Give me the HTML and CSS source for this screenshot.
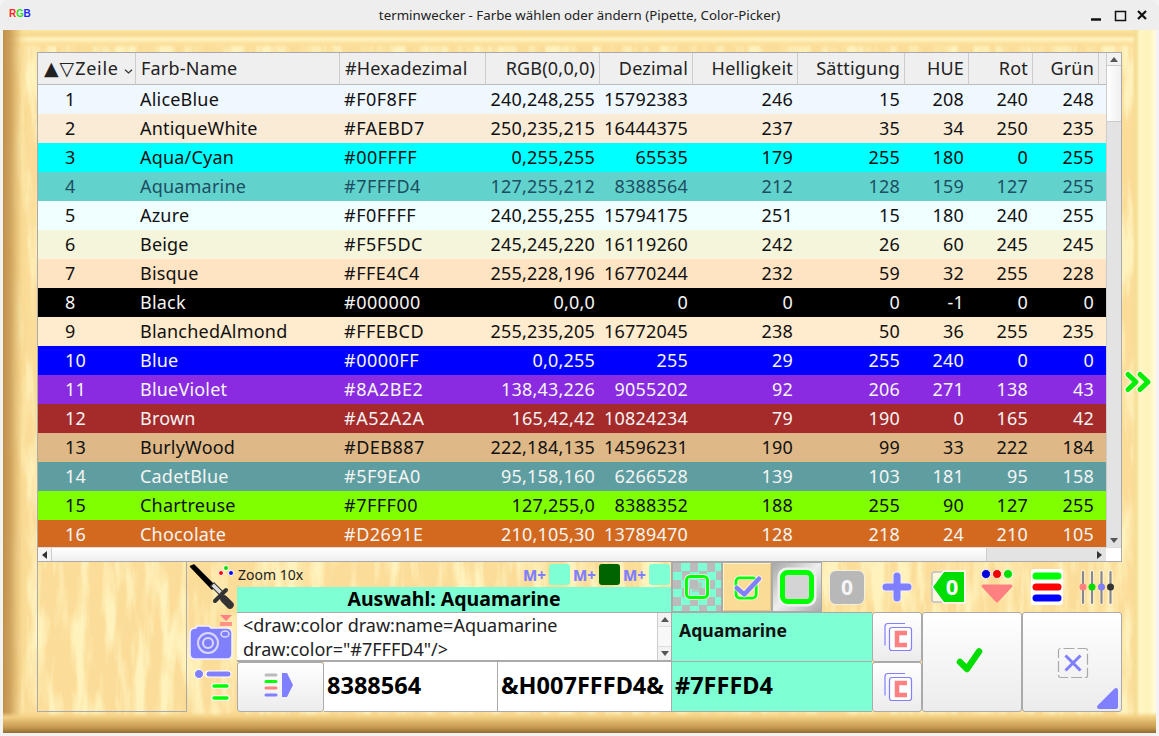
FILE: index.html
```html
<!DOCTYPE html>
<html lang="de">
<head>
<meta charset="utf-8">
<title>terminwecker - Farbe wählen oder ändern</title>
<link rel="stylesheet" href="styles.css">
</head>
<body>
<header class="titlebar">
  <span class="logo"><span class="r">R</span><span class="g">G</span><span class="b">B</span></span>
  <span class="title">terminwecker - Farbe wählen oder ändern (Pipette, Color-Picker)</span>
  <span class="winbtns">
    <svg width="70" height="30" viewBox="0 0 70 30"><path d="M3 19.500h10" stroke="#111" stroke-width="2.500"/><rect x="27.500" y="11.500" width="10" height="9" fill="none" stroke="#111" stroke-width="1.500"/><path d="M50 11l8 8M58 11l-8 8" stroke="#111" stroke-width="2.200"/></svg>
  </span>
</header>
<main class="wood">
  <svg class="woodtex" width="1153" height="703" aria-hidden="true">
    <filter id="grain" x="0" y="0" width="100%" height="100%" color-interpolation-filters="sRGB"><feTurbulence type="fractalNoise" baseFrequency="0.07 0.012" numOctaves="4" seed="7"/><feColorMatrix values="0 0 0 0 1 0 0 0 0 0.95 0 0 0 0 0.74 3.500 0 0 0 -1.450"/></filter>
    <rect width="1153" height="703" filter="url(#grain)"/>
  </svg>
  <div class="bevel"></div>
  <div class="content">
    <section class="tablebox">
      <div class="tablerow">
        <div class="tableclip">
          <table class="colors">
            <colgroup><col class="c0"><col class="c1"><col class="c2"><col class="c3"><col class="c4"><col class="c5"><col class="c6"><col class="c7"><col class="c8"><col class="c9"><col class="c10"></colgroup>
            <thead><tr><th class="sortcol"><span class="sort">▲▽</span><span class="zeile">Zeile</span><svg class="chev" width="9" height="5" viewBox="0 0 9 5"><path d="M1 .7L4.500 4 8 .7" fill="none" stroke="#333" stroke-width="1.200"/></svg></th><th class="l">Farb-Name</th><th class="h">#Hexadezimal</th><th>RGB(0,0,0)</th><th>Dezimal</th><th>Helligkeit</th><th>Sättigung</th><th>HUE</th><th>Rot</th><th>Grün</th><th></th></tr></thead>
            <tbody>
              <tr style="background:#F0F8FF"><td class="n">1</td><td class="l">AliceBlue</td><td class="h">#F0F8FF</td><td>240,248,255</td><td>15792383</td><td>246</td><td>15</td><td>208</td><td>240</td><td>248</td><td></td></tr>
              <tr style="background:#FAEBD7"><td class="n">2</td><td class="l">AntiqueWhite</td><td class="h">#FAEBD7</td><td>250,235,215</td><td>16444375</td><td>237</td><td>35</td><td>34</td><td>250</td><td>235</td><td></td></tr>
              <tr style="background:#00FFFF"><td class="n">3</td><td class="l">Aqua/Cyan</td><td class="h">#00FFFF</td><td>0,255,255</td><td>65535</td><td>179</td><td>255</td><td>180</td><td>0</td><td>255</td><td></td></tr>
              <tr class="sel" style="background:#62D3CC"><td class="n">4</td><td class="l">Aquamarine</td><td class="h">#7FFFD4</td><td>127,255,212</td><td>8388564</td><td>212</td><td>128</td><td>159</td><td>127</td><td>255</td><td></td></tr>
              <tr style="background:#F0FFFF"><td class="n">5</td><td class="l">Azure</td><td class="h">#F0FFFF</td><td>240,255,255</td><td>15794175</td><td>251</td><td>15</td><td>180</td><td>240</td><td>255</td><td></td></tr>
              <tr style="background:#F5F5DC"><td class="n">6</td><td class="l">Beige</td><td class="h">#F5F5DC</td><td>245,245,220</td><td>16119260</td><td>242</td><td>26</td><td>60</td><td>245</td><td>245</td><td></td></tr>
              <tr style="background:#FFE4C4"><td class="n">7</td><td class="l">Bisque</td><td class="h">#FFE4C4</td><td>255,228,196</td><td>16770244</td><td>232</td><td>59</td><td>32</td><td>255</td><td>228</td><td></td></tr>
              <tr class="lt" style="background:#000000"><td class="n">8</td><td class="l">Black</td><td class="h">#000000</td><td>0,0,0</td><td>0</td><td>0</td><td>0</td><td>-1</td><td>0</td><td>0</td><td></td></tr>
              <tr style="background:#FFEBCD"><td class="n">9</td><td class="l">BlanchedAlmond</td><td class="h">#FFEBCD</td><td>255,235,205</td><td>16772045</td><td>238</td><td>50</td><td>36</td><td>255</td><td>235</td><td></td></tr>
              <tr class="lt" style="background:#0000FF"><td class="n">10</td><td class="l">Blue</td><td class="h">#0000FF</td><td>0,0,255</td><td>255</td><td>29</td><td>255</td><td>240</td><td>0</td><td>0</td><td></td></tr>
              <tr class="lt" style="background:#8A2BE2"><td class="n">11</td><td class="l">BlueViolet</td><td class="h">#8A2BE2</td><td>138,43,226</td><td>9055202</td><td>92</td><td>206</td><td>271</td><td>138</td><td>43</td><td></td></tr>
              <tr class="lt" style="background:#A52A2A"><td class="n">12</td><td class="l">Brown</td><td class="h">#A52A2A</td><td>165,42,42</td><td>10824234</td><td>79</td><td>190</td><td>0</td><td>165</td><td>42</td><td></td></tr>
              <tr style="background:#DEB887"><td class="n">13</td><td class="l">BurlyWood</td><td class="h">#DEB887</td><td>222,184,135</td><td>14596231</td><td>190</td><td>99</td><td>33</td><td>222</td><td>184</td><td></td></tr>
              <tr class="lt" style="background:#5F9EA0"><td class="n">14</td><td class="l">CadetBlue</td><td class="h">#5F9EA0</td><td>95,158,160</td><td>6266528</td><td>139</td><td>103</td><td>181</td><td>95</td><td>158</td><td></td></tr>
              <tr style="background:#7FFF00"><td class="n">15</td><td class="l">Chartreuse</td><td class="h">#7FFF00</td><td>127,255,0</td><td>8388352</td><td>188</td><td>255</td><td>90</td><td>127</td><td>255</td><td></td></tr>
              <tr class="lt" style="background:#D2691E"><td class="n">16</td><td class="l">Chocolate</td><td class="h">#D2691E</td><td>210,105,30</td><td>13789470</td><td>128</td><td>218</td><td>24</td><td>210</td><td>105</td><td></td></tr>
            </tbody>
          </table>
        </div>
        <div class="vbar">
          <span class="sbtn"><i class="up"></i></span>
          <span class="vthumb"></span>
          <span class="vtrough"></span>
          <span class="sbtn plain"><i class="down"></i></span>
        </div>
      </div>
      <div class="hbar">
        <span class="hbtn"><i class="left"></i></span>
        <span class="hthumb"></span>
        <span class="htrough"></span>
        <span class="hbtn"><i class="right"></i></span>
        <span class="corner"></span>
      </div>
    </section>

    <section class="bottom">
      <div class="preview"></div>
      <div class="tools">
        <svg width="50" height="50" viewBox="0 0 50 50"><path d="M3.500 4.500L7 3l21 21-3 3z" fill="#000" stroke="#000" stroke-width="1.500" stroke-linejoin="round"/><path d="M23 24l4-4 10 10-4 4z" fill="#333"/><path d="M24.500 24l2.500-2.500 8 8-2.500 2.500z" fill="#ddd"/><path d="M28 39l11-11" stroke="#333" stroke-width="4" stroke-linecap="round"/><path d="M37 37l6 6" stroke="#333" stroke-width="7.500" stroke-linecap="round"/><circle cx="34" cy="11" r="2.500" fill="#f00" stroke="#fff"/><circle cx="39" cy="6" r="2.500" fill="#0d0" stroke="#fff"/><circle cx="44" cy="11" r="2.500" fill="#00f" stroke="#fff"/></svg>
        <svg width="50" height="50" viewBox="0 0 50 50"><path d="M33 3h12l-6 6z" fill="#ff8080"/><path d="M33 10h12v4H33z" fill="#ff8080" opacity=".8"/><path d="M9 16l1-2h12l2 2h15q6 0 6 5v21q0 5-5 5H8q-5 0-5-5V21q0-5 6-5z" fill="#8080ff" stroke="#f4f0ff" stroke-width="1.500"/><circle cx="21" cy="31" r="10" fill="none" stroke="#d9d9ff" stroke-width="2"/><circle cx="21" cy="31" r="5" fill="none" stroke="#d9d9ff" stroke-width="2"/><ellipse cx="38" cy="22" rx="4" ry="3" fill="none" stroke="#d9d9ff" stroke-width="1.500"/></svg>
        <svg width="50" height="50" viewBox="0 0 50 50"><circle cx="12" cy="12" r="4.500" fill="#8080ff" stroke="#fff"/><path d="M21 12h20" stroke="#fff" stroke-width="7" stroke-linecap="round"/><path d="M22 12h19" stroke="#8080ff" stroke-width="5" stroke-linecap="round"/><path d="M27 24h13M27 36h13" stroke="#fff" stroke-width="5.500" stroke-linecap="round"/><path d="M27 24h13M27 36h13" stroke="#0f0" stroke-width="3.500" stroke-linecap="round"/></svg>
      </div>
      <div class="center-top">
        <div class="zoomrow">
          <span class="zoom">Zoom 10x</span>
          <span class="mem"><b>M+</b><i class="sw aqua"></i></span>
          <span class="mem"><b>M+</b><i class="sw green"></i></span>
          <span class="mem"><b>M+</b><i class="sw aqua"></i></span>
        </div>
        <div class="auswahl">Auswahl: Aquamarine</div>
      </div>
      <div class="iconrow">
        <span class="ico checker"><svg width="50" height="50" viewBox="0 0 50 50"><rect x="14" y="14" width="22" height="22" rx="4" fill="none" stroke="#dfffe8" stroke-width="5"/><rect x="14" y="14" width="22" height="22" rx="4" fill="none" stroke="#0f0" stroke-width="3"/><rect x="20" y="20" width="10" height="10" fill="#bbb" opacity=".7"/></svg></span>
        <span class="ico woodbtn"><svg width="50" height="50" viewBox="0 0 50 50"><rect x="13" y="15" width="22" height="22" rx="4" fill="none" stroke="#fff" stroke-width="5" opacity=".8"/><rect x="13" y="15" width="22" height="22" rx="4" fill="none" stroke="#0f0" stroke-width="3"/><path d="M14 26l8 7 16-17" fill="none" stroke="#fff" stroke-width="7" stroke-linecap="round" stroke-linejoin="round" opacity=".6"/><path d="M14 26l8 7 16-17" fill="none" stroke="#8080ff" stroke-width="5" stroke-linecap="round" stroke-linejoin="round"/></svg></span>
        <span class="ico activebtn"><svg width="48" height="48" viewBox="0 0 48 48"><rect x="8.500" y="8.500" width="31" height="31" rx="5" fill="none" stroke="#eee" stroke-width="8"/><rect x="9.500" y="9.500" width="29" height="29" rx="5" fill="#d4d4d4" stroke="#0f0" stroke-width="5"/></svg></span>
        <span class="ico"><span class="zero">0</span></span>
        <span class="ico"><svg width="50" height="50" viewBox="0 0 50 50"><path d="M25 14v22M14 25h22" stroke="#f3eeff" stroke-width="9" stroke-linecap="round"/><path d="M25 14v22M14 25h22" stroke="#8080ff" stroke-width="7" stroke-linecap="round"/></svg></span>
        <span class="ico"><svg width="50" height="50" viewBox="0 0 50 50"><rect x="10" y="10" width="26" height="30" fill="#fff8d8" stroke="#fff" stroke-width="1"/><rect x="10" y="10" width="26" height="30" rx="2" fill="none" stroke="#bbb" stroke-width="1.500"/><path d="M9.500 25L21 8.500H43.500V41.500H21z" fill="#fff"/><path d="M11 25L22 10H42V40H22z" fill="#0d0"/><text x="30" y="33" class="svg0">0</text></svg></span>
        <span class="ico"><svg width="50" height="50" viewBox="0 0 50 50"><circle cx="14" cy="12" r="4.500" fill="#00d" stroke="#fff" stroke-width=".8"/><circle cx="25" cy="12" r="4.500" fill="#e00" stroke="#fff" stroke-width=".8"/><circle cx="36" cy="12" r="4.500" fill="#0d0" stroke="#fff" stroke-width=".8"/><path d="M11 24h28L25 39z" fill="#ff8080" stroke="#ff8080" stroke-width="3" stroke-linejoin="round"/></svg></span>
        <span class="ico"><svg width="50" height="50" viewBox="0 0 50 50"><rect x="9" y="7" width="32" height="36" rx="3" fill="#fff"/><path d="M14 14h22" stroke="#0f0" stroke-width="7" stroke-linecap="round"/><path d="M14 25h22" stroke="#f00" stroke-width="7" stroke-linecap="round"/><path d="M14 36h22" stroke="#00f" stroke-width="7" stroke-linecap="round"/></svg></span>
        <span class="ico"><svg width="50" height="50" viewBox="0 0 50 50"><path d="M11 10v31M20 10v31M29.500 10v31M38.500 10v31" stroke="#fff" stroke-width="4" stroke-linecap="round" opacity=".7"/><path d="M11 10v31M20 10v31M29.500 10v31M38.500 10v31" stroke="#888" stroke-width="2.200" stroke-linecap="round"/><circle cx="11" cy="25" r="3.500" fill="#ff8080"/><circle cx="20" cy="25" r="3.500" fill="#0d0"/><circle cx="29.500" cy="25" r="3.500" fill="#8080ff"/><circle cx="38.500" cy="25" r="3.500" fill="#333"/></svg></span>
      </div>
      <div class="xmlbox">
        <p class="xml">&lt;draw:color draw:name=Aquamarine<br>draw:color="#7FFFD4"/&gt;</p>
        <div class="xmlbar"><span class="xbtn"><i class="up"></i></span><span class="xtrack"></span><span class="xbtn"><i class="down"></i></span></div>
      </div>
      <div class="namebox">Aquamarine</div>
      <button class="btn copy r2"><svg width="36" height="36" viewBox="0 0 36 36"><path d="M26 4.500H9q-3 0-3 3v19" fill="none" stroke="#8080ff" stroke-width="1.200"/><rect x="10.500" y="8.500" width="22" height="23" rx="2.500" fill="#fff" stroke="#8080ff" stroke-width="1.200"/><path d="M28 14H18v12h10" fill="none" stroke="#ff8080" stroke-width="4.500"/></svg></button>
      <button class="btn ok"><svg width="40" height="40" viewBox="0 0 40 40"><path d="M8 20l7 7L27 9.500" fill="none" stroke="#0d0" stroke-width="6.500" stroke-linecap="round" stroke-linejoin="round"/></svg></button>
      <button class="btn cancel"><svg width="36" height="36" viewBox="0 0 36 36"><rect x="4.500" y="4.500" width="29" height="29" rx="2" fill="none" stroke="#aaa" stroke-width="1.200" stroke-dasharray="11 3" stroke-dashoffset="-3"/><path d="M11.500 11.500l15 15M26.500 11.500l-15 15" stroke="#8080ff" stroke-width="3"/></svg><svg class="corner-tri" width="26" height="26" viewBox="0 0 26 26"><path d="M4 22L21 5v17z" fill="#8080ff" stroke="#8080ff" stroke-width="4" stroke-linejoin="round"/></svg></button>
      <button class="btn send"><svg width="40" height="30" viewBox="0 0 40 30"><path d="M5 3h10" stroke="#bbb" stroke-width="3" stroke-linecap="round"/><path d="M5 9.500h10" stroke="#0f0" stroke-width="3" stroke-linecap="round"/><path d="M5 16h10" stroke="#ff8080" stroke-width="3" stroke-linecap="round"/><path d="M5 23h10" stroke="#8080ff" stroke-width="3" stroke-linecap="round"/><path d="M21 1h5l6 12-6 12h-5z" fill="#8080ff"/></svg></button>
      <div class="valbox white">8388564</div>
      <div class="valbox white">&amp;H007FFFD4&amp;</div>
      <div class="valbox aqua">#7FFFD4</div>
      <button class="btn copy"><svg width="36" height="36" viewBox="0 0 36 36"><path d="M26 4.500H9q-3 0-3 3v19" fill="none" stroke="#8080ff" stroke-width="1.200"/><rect x="10.500" y="8.500" width="22" height="23" rx="2.500" fill="#fff" stroke="#8080ff" stroke-width="1.200"/><path d="M28 14H18v12h10" fill="none" stroke="#ff8080" stroke-width="4.500"/></svg></button>
    </section>
  </div>
  <aside class="side">
    <svg width="32" height="26" viewBox="0 0 32 26"><path d="M5 5.500l8 7.500-8 7.500M17 5.500l8 7.500-8 7.500" fill="none" stroke="#fff8d8" stroke-width="7.500" stroke-linecap="round" stroke-linejoin="round"/><path d="M5 5.500l8 7.500-8 7.500M17 5.500l8 7.500-8 7.500" fill="none" stroke="#0e0" stroke-width="5" stroke-linecap="round" stroke-linejoin="round"/></svg>
  </aside>
</main>
</body>
</html>
```

FILE: styles.css
```css
* { box-sizing: border-box; }
html, body { margin: 0; height: 100%; }
body {
  background: #f3f3f3;
  width: 1159px;
  height: 736px;
  overflow: hidden;
  font-family: "Noto Sans", "Open Sans", sans-serif;
  color: #111;
}
.titlebar {
  height: 30px;
  background: #eeeeee;
  border-radius: 9px 9px 0 0;
  display: flex;
  align-items: center;
  justify-content: center;
  position: relative;
  font-size: 13.3px;
  color: #222;
}
.logo {
  position: absolute;
  left: 9px;
  top: 8px;
  font: bold 10px "Liberation Sans", sans-serif;
  letter-spacing: -.3px;
  text-shadow: 0 0 2px #fff;
}
.logo .r { color: #ff2020; }
.logo .g { color: #20e020; }
.logo .b { color: #2020ff; }
.winbtns { position: absolute; left: 1088px; top: 0; height: 30px; }
.wood {
  position: relative;
  margin-left: 3px;
  width: 1153px;
  height: 703px;
  background: #fbdc98;
  display: flex;
  align-items: center;
  padding: 22px 0 21px 34px;
}
.woodtex { position: absolute; left: 0; top: 0; }
.bevel {
  position: absolute;
  inset: 0;
  background:
    linear-gradient(to top, #8f6a30 0, #c2964e 5px, #dcb468 11px, #f2cf83 16px, transparent 21px) bottom / 100% 30px no-repeat,
    linear-gradient(to right, rgba(190,140,70,.95) 0, rgba(200,155,85,.9) 7px, rgba(222,180,105,.75) 13px, rgba(245,215,140,.4) 19px, transparent 25px) left / 30px 100% no-repeat,
    linear-gradient(to left, #fffbe0 0, #fdf2b8 8px, #fff6c6 16px, #f5dd95 20px, transparent 24px) right / 30px 100% no-repeat,
    linear-gradient(to bottom, #fbe59e 0, #f7d98f 5px, #fff2c0 9px, #fbdf9a 14px, transparent 18px) top / 100% 20px no-repeat;
}
.content { position: relative; width: 1085px; height: 660px; display: flex; flex-direction: column; }
.side { position: relative; width: 34px; display: flex; justify-content: center; }

.tablebox { height: 510px; border: 1px solid #aaa; background: #fff; display: flex; flex-direction: column; }
.tablerow { height: 494px; display: flex; }
.tableclip { width: 1069px; height: 494px; overflow: hidden; }
.colors { table-layout: fixed; width: 1069px; border-collapse: separate; border-spacing: 0; font-size: 18px; letter-spacing: .2px; }
.c0 { width: 98px; } .c1 { width: 204px; } .c2 { width: 146px; } .c3 { width: 114px; } .c4 { width: 93px; }
.c5 { width: 105px; } .c6 { width: 107px; } .c7 { width: 64px; } .c8 { width: 64px; } .c9 { width: 66px; } .c10 { width: 8px; }
.colors th {
  height: 32px;
  font-weight: 400;
  background: #efefef;
  color: #222;
  text-align: right;
  padding: 0 4px 2px 0;
  border-right: 1px solid #ccc;
  border-bottom: 1px solid #bbb;
  white-space: nowrap;
}
.colors th:last-child { border-right: 0; }
.colors td { height: 29px; padding: 0 5px 2px 0; text-align: right; white-space: nowrap; overflow: hidden; }
.colors .sortcol { text-align: left; padding: 0 0 2px 6px; }
.sort { letter-spacing: 1px; font-family: "DejaVu Sans", sans-serif; font-size: 19px; }
.zeile { letter-spacing: .7px; }
.chev { margin-left: 5px; vertical-align: 1px; }
.colors th.l, .colors th.h { text-align: left; padding-left: 5px; }
.colors td.l, .colors td.h { text-align: left; padding-left: 4px; }
.colors td.h { letter-spacing: .5px; }
.colors td.n { text-align: left; padding-left: 27px; }
.lt td { color: #f4f4f4; }
.sel td { color: #1d4e63; }

.vbar { width: 15px; display: flex; flex-direction: column; border-left: 1px solid #ccc; background: #f8f8f8; }
.sbtn { height: 13px; display: flex; align-items: center; justify-content: center; background: #f2f2f2; border-bottom: 1px solid #ccc; }
.sbtn.plain { border-bottom: 0; background: #e2e2e2; }
.vthumb { height: 56px; background: linear-gradient(to right, #fff, #f0f0f0); border-bottom: 1px solid #ccc; }
.vtrough { flex: 1; background: #e3e3e3; }
i.up, i.down, i.left, i.right { width: 0; height: 0; display: block; border: 4px solid transparent; }
i.up { border-bottom: 5px solid #555; border-top: 0; }
i.down { border-top: 5px solid #555; border-bottom: 0; }
i.left { border-right: 5px solid #333; border-left: 0; }
i.right { border-left: 5px solid #333; border-right: 0; }
.hbar { height: 14px; display: flex; background: #e3e3e3; border-top: 1px solid #ddd; }
.hbtn { width: 14px; display: flex; align-items: center; justify-content: center; background: #f5f5f5; border-right: 1px solid #ccc; }
.hthumb { width: 935px; background: linear-gradient(to bottom, #fff, #eee); border-right: 1px solid #ccc; }
.htrough { flex: 1; background: #e3e3e3; }
.hbar .hbtn:nth-last-child(2) { background: #e3e3e3; border: 0; }
.corner { width: 15px; background: #fff; }

.bottom {
  height: 150px;
  display: grid;
  grid-template-columns: 150px 50px 87px 174px 174px 200px 50px 100px 100px;
  grid-template-rows: 50px 50px 50px;
}
.preview { grid-row: 1 / 4; border: 1px solid #aaa; border-top: 0; }
.tools { grid-row: 1 / 4; grid-column: 2; display: flex; flex-direction: column; }
.tools svg { display: block; }
.center-top { grid-column: 3 / 6; grid-row: 1; display: flex; flex-direction: column; border-right: 1px solid #aaa; }
.zoomrow { height: 25px; display: flex; align-items: center; padding-left: 1px; }
.zoom { font-size: 14px; color: #222; margin-right: auto; }
.mem { width: 50px; display: flex; align-items: center; justify-content: flex-end; gap: 3px; padding-right: 1px; }
.mem b { font: 800 15px "Noto Sans", sans-serif; color: #8080ff; }
.sw { width: 21px; height: 21px; border-radius: 3px; display: block; }
.sw.aqua { background: #7fffd4; }
.sw.green { background: #006400; }
.auswahl { height: 25px; background: #7fffd4; text-align: center; font-weight: 700; font-size: 19.5px; line-height: 23px; color: #000; }
.iconrow { grid-column: 6 / 10; grid-row: 1; display: flex; }
.ico { width: 50px; height: 50px; display: flex; align-items: center; justify-content: center; }
.ico svg { display: block; }
.checker { background: repeating-conic-gradient(#7fffd4 0 25%, #bbb 0 50%) 0 0 / 17px 17px; border: 1px solid #aaa; }
.woodbtn { background: #fbdc97; border: 2px solid #fff1c8; border-right-color: #e8c67e; border-bottom-color: #e8c67e; outline: 1px solid #aaa; outline-offset: -1px; }
.activebtn { background: linear-gradient(135deg, #a8a8a8, #eee 50%, #aaa); border: 1px solid #aaa; }
.zero { width: 36px; height: 35px; border-radius: 7px; background: #b8b8b8; border: 1px solid #f5f1e0; color: #f5f5f5; font-weight: 700; font-size: 21px; text-align: center; line-height: 33px; }
.svg0 { font: bold 22px "Noto Sans", sans-serif; fill: #fff; text-anchor: middle; }
.xmlbox { grid-column: 3 / 6; grid-row: 2; background: #fff; border: 1px solid #aaa; border-width: 1px 0 2px 0; display: flex; }
.xml { flex: 1; margin: 0; padding: 0 0 0 6px; font-size: 18px; line-height: 24px; color: #222; white-space: nowrap; }
.xmlbar { width: 15px; display: flex; flex-direction: column; border-left: 1px solid #ccc; background: #f4f4f4; border-right: 1px solid #aaa; }
.xbtn { height: 13px; display: flex; align-items: center; justify-content: center; background: #f2f2f2; }
.xtrack { flex: 1; background: #f8f8f8; border: 1px solid #ddd; border-width: 1px 0; }
.namebox { grid-column: 6; grid-row: 2; background: #7fffd4; border-top: 1px solid #aaa; border-bottom: 1px solid #aaa; padding: 5px 0 0 7px; font-weight: 700; font-size: 17.6px; color: #111; }
.btn { padding: 0; margin: 0; border: 1px solid #aaa; border-radius: 3px; background: linear-gradient(to bottom, #fff, #ececec); display: flex; align-items: center; justify-content: center; font: inherit; position: relative; }
.btn svg { display: block; }
.copy.r2 { grid-column: 7; grid-row: 2; }
.copy { grid-column: 7; grid-row: 3; }
.ok { grid-column: 8; grid-row: 2 / 4; }
.cancel { grid-column: 9; grid-row: 2 / 4; }
.btn .corner-tri { position: absolute; right: 0; bottom: 0; }
.send { grid-column: 3; grid-row: 3; }
.valbox { grid-row: 3; border: 1px solid #aaa; border-width: 0 1px 1px 0; font-weight: 700; font-size: 23.5px; line-height: 47px; padding-left: 3px; color: #000; white-space: nowrap; }
.valbox.white { background: #fff; }
.valbox.aqua { background: #7fffd4; grid-column: 6; border-right: 0; }
```
